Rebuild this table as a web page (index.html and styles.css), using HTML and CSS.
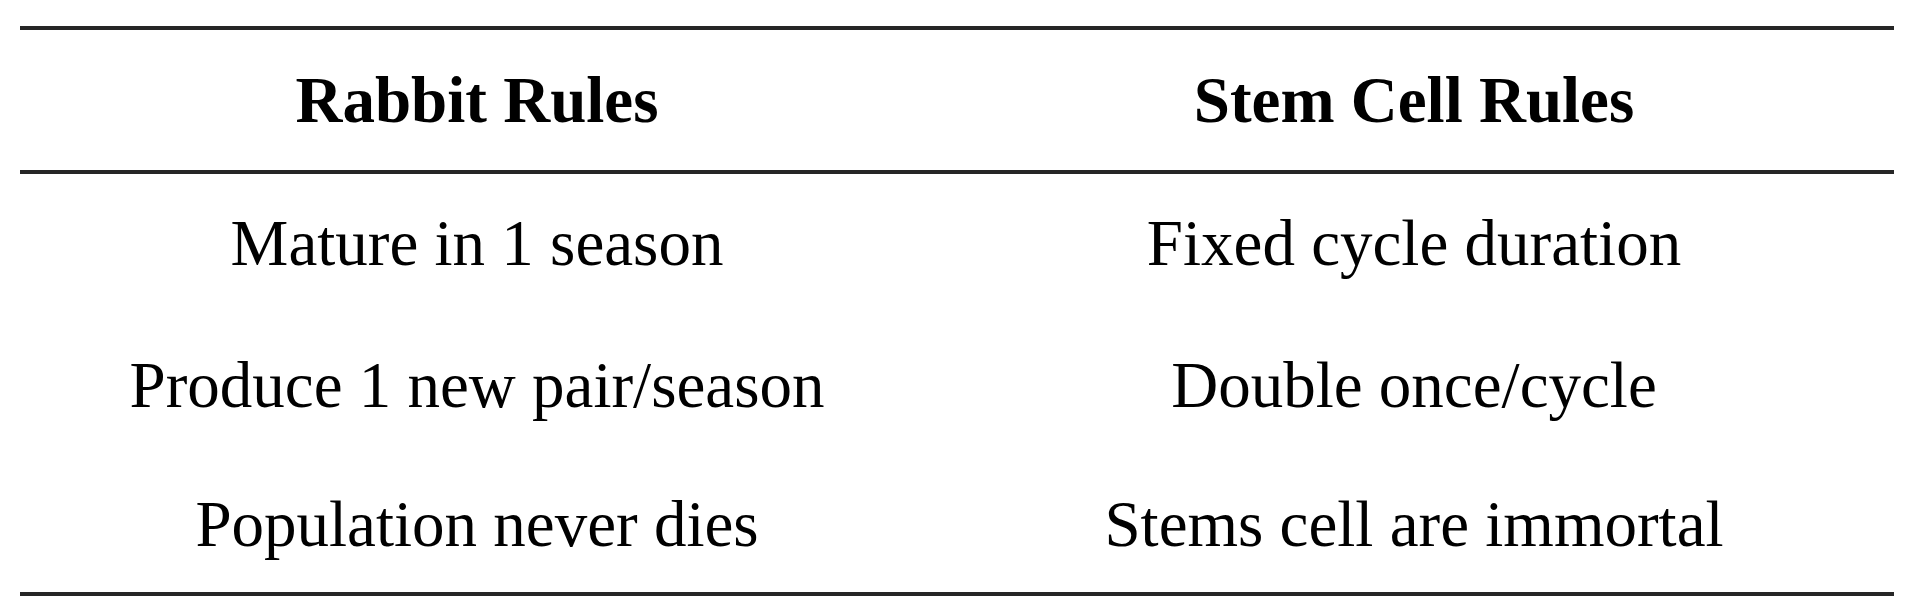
FILE: index.html
```html
<!DOCTYPE html>
<html lang="en">
<head>
<meta charset="utf-8">
<title>Rabbit Rules vs Stem Cell Rules</title>
<link rel="stylesheet" href="styles.css">
</head>
<body>
<div class="rules-table">
  <div class="row head">
    <div class="cell">Rabbit Rules</div>
    <div class="cell">Stem Cell Rules</div>
  </div>
  <div class="body">
    <div class="row r1">
      <div class="cell">Mature in 1 season</div>
      <div class="cell">Fixed cycle duration</div>
    </div>
    <div class="row r2">
      <div class="cell">Produce 1 new pair/season</div>
      <div class="cell">Double once/cycle</div>
    </div>
    <div class="row r3">
      <div class="cell">Population never dies</div>
      <div class="cell">Stems cell are immortal</div>
    </div>
  </div>
</div>
</body>
</html>
```

FILE: styles.css
```css
html, body {
  margin: 0;
  padding: 0;
  background: #ffffff;
}

body {
  font-family: "Liberation Serif", "Times New Roman", serif;
  color: #000000;
}

.rules-table {
  width: 1874px;
  margin: 26px 0 0 20px;
  border-top: 4px solid #262626;
  border-bottom: 4px solid #262626;
}

.row {
  display: grid;
  grid-template-columns: 914px 960px;
  height: 139px;
}

.head {
  height: 140px;
  border-bottom: 4px solid #262626;
  font-weight: bold;
}

.r1 { height: 139px; }
.r2 { height: 144px; }
.r3 { height: 135px; }

.cell {
  display: flex;
  align-items: center;
  justify-content: center;
  font-size: 65px;
  line-height: 1;
  white-space: nowrap;
}
```
